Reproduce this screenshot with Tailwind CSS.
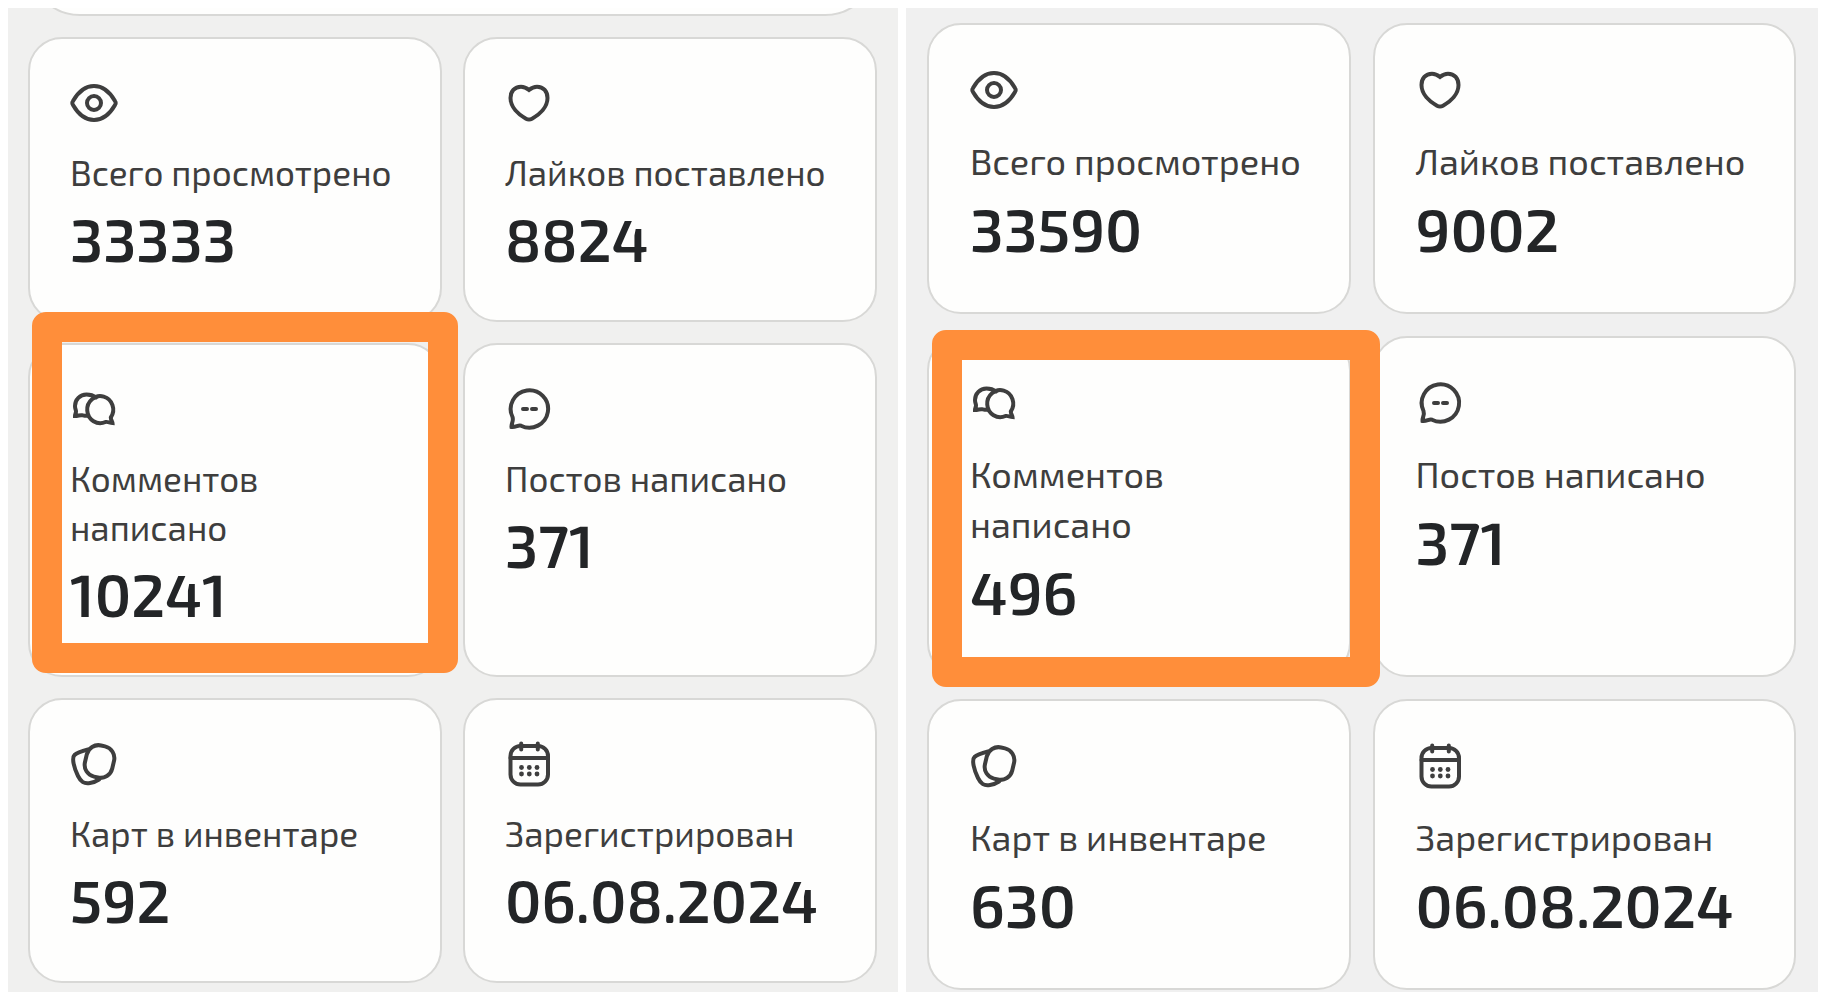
<!DOCTYPE html>
<html lang="ru">
<head>
  <meta charset="UTF-8">
  <meta name="viewport" content="width=device-width, initial-scale=1.0">
  <script src="https://cdn.jsdelivr.net/npm/@tailwindcss/browser@4"></script>
  <title>Статистика профиля</title>
</head>
<body class="bg-white p-2 font-['Exo_2','Noto_Sans',sans-serif] text-[#3e3e3e]">

  <!-- Иконки -->
  <svg class="hidden">
    <symbol id="eye" viewBox="0 0 48 48">
      <path d="M3 22C7 15 14 7 24 7s17 8 21 15c1 1.500 1 2.500 0 4-4 7-11 15-21 15S7 33 3 26c-1-1.500-1-2.500 0-4z"/>
      <circle cx="24" cy="24" r="7"/>
    </symbol>
    <symbol id="heart" viewBox="0 0 48 48">
      <path d="M24 11C21 8.500 18.500 7.700 16 7.700 9.500 7.700 5.500 12.500 5.500 19c0 9 8 16.500 15.500 20.700 2 1.100 4 1.100 6 0C34.500 35.500 42.500 28 42.500 19c0-6.500-4-11.300-10.500-11.300-2.500 0-5 .8-8 3.300z"/>
    </symbol>
    <symbol id="comments" viewBox="0 0 48 48">
      <path d="M40.800 32.500A13 13.500 0 1 0 35.500 37c2-.6 4 .8 7 1-.2-2.200-1.700-3-1.700-5.500z"/>
      <path d="M26 12.500C23.500 10.500 20 9.500 16.500 9.500 10 9.500 5 14.500 5 21c0 3 1 4 1 5.500S5 29.500 5 31c3 0 5-1.200 7-.8 1.500.3 3 .8 5.500.6"/>
    </symbol>
    <symbol id="post" viewBox="0 0 48 48">
      <path d="M7.500 32A18.700 18.700 0 1 1 16 40.700c-3-1-5 1.800-9.500 1.300C6 38.500 9 36.500 7.500 32z"/>
      <path d="M18 24h4M27 24h4"/>
    </symbol>
    <symbol id="cards" viewBox="0 0 48 48">
      <rect x="15.500" y="5.500" width="28" height="32" rx="12" transform="rotate(13 29.500 21.500)"/>
      <path d="M18 9.500C12 11 7 12.500 4.500 15 1.500 18 4 28 8 36c3 6 6 8 12 7 3-.5 6-1.500 9-3.500"/>
    </symbol>
    <symbol id="calendar" viewBox="0 0 48 48">
      <rect x="5.500" y="6" width="37.500" height="38.500" rx="10"/>
      <path d="M5.500 18H43M16.200 3.500v6M32.800 3.500v6"/>
      <g fill="currentColor" stroke="none">
        <circle cx="16.500" cy="27.500" r="2.400"/><circle cx="24.300" cy="27.500" r="2.400"/><circle cx="32" cy="27.500" r="2.400"/>
        <circle cx="16.500" cy="34" r="2.400"/><circle cx="24.300" cy="34" r="2.400"/><circle cx="32" cy="34" r="2.400"/>
      </g>
    </symbol>
  </svg>

  <main class="grid grid-cols-[890fr_912fr] gap-2">

    <!-- Первый профиль -->
    <section class="bg-[#f0f0ef] pl-5 pr-[21px] pb-[9px] overflow-hidden">
      <div class="-mt-20 mb-[21px] h-22 rounded-b-[52px] border-2 border-[#d8d8d6] bg-[#fefefd]"></div>
      <div class="grid grid-cols-2 gap-[21px]">
        <article class="rounded-[34px] border-2 border-[#d8d8d6] bg-[#fefefd] p-10">
          <svg class="mb-[21px] size-12 fill-none stroke-current stroke-4 [stroke-linecap:round]"><use href="#eye"/></svg>
          <h2 class="text-[35px] leading-[49px]">Всего просмотрено</h2>
          <p class="text-[59px] leading-[83px] font-semibold text-[#232527]">33333</p>
        </article>
        <article class="rounded-[34px] border-2 border-[#d8d8d6] bg-[#fefefd] p-10">
          <svg class="mb-[21px] size-12 fill-none stroke-current stroke-4 [stroke-linecap:round]"><use href="#heart"/></svg>
          <h2 class="text-[35px] leading-[49px]">Лайков поставлено</h2>
          <p class="text-[59px] leading-[83px] font-semibold text-[#232527]">8824</p>
        </article>
        <article class="relative rounded-[34px] border-2 border-[#d8d8d6] bg-[#fefefd] p-10">
          <svg class="mb-[21px] size-12 fill-none stroke-current stroke-4 [stroke-linecap:round]"><use href="#comments"/></svg>
          <h2 class="text-[35px] leading-[49px]">Комментов написано</h2>
          <p class="text-[59px] leading-[83px] font-semibold text-[#232527]">10241</p>
          <!-- Рамка выделения -->
          <div class="absolute -top-[33px] -right-[18px] bottom-[2px] left-[2px] z-10 rounded-[14px] border-[30px] border-[#ff8e3a]"></div>
        </article>
        <article class="rounded-[34px] border-2 border-[#d8d8d6] bg-[#fefefd] p-10">
          <svg class="mb-[21px] size-12 fill-none stroke-current stroke-4 [stroke-linecap:round]"><use href="#post"/></svg>
          <h2 class="text-[35px] leading-[49px]">Постов написано</h2>
          <p class="text-[59px] leading-[83px] font-semibold text-[#232527]">371</p>
        </article>
        <article class="rounded-[34px] border-2 border-[#d8d8d6] bg-[#fefefd] p-10">
          <svg class="mb-[21px] size-12 fill-none stroke-current stroke-4 [stroke-linecap:round]"><use href="#cards"/></svg>
          <h2 class="text-[35px] leading-[49px]">Карт в инвентаре</h2>
          <p class="text-[59px] leading-[83px] font-semibold text-[#232527]">592</p>
        </article>
        <article class="rounded-[34px] border-2 border-[#d8d8d6] bg-[#fefefd] p-10">
          <svg class="mb-[21px] size-12 fill-none stroke-current stroke-4 [stroke-linecap:round]"><use href="#calendar"/></svg>
          <h2 class="text-[35px] leading-[49px]">Зарегистрирован</h2>
          <p class="text-[59px] leading-[83px] font-semibold text-[#232527]">06.08.2024</p>
        </article>
      </div>
    </section>

    <!-- Второй профиль -->
    <section class="bg-[#f0f0f0] pl-[21px] pr-[22px] pt-[15px]">
      <div class="grid grid-cols-2 gap-[22px]">
        <article class="rounded-[34px] border-2 border-[#d8d8d6] bg-[#fefefd] p-[41px]">
          <svg class="mb-[22px] size-12 fill-none stroke-current stroke-4 [stroke-linecap:round]"><use href="#eye"/></svg>
          <h2 class="text-[36px] leading-[50px]">Всего просмотрено</h2>
          <p class="text-[60px] leading-[85px] font-semibold text-[#232527]">33590</p>
        </article>
        <article class="rounded-[34px] border-2 border-[#d8d8d6] bg-[#fefefd] p-[41px]">
          <svg class="mb-[22px] size-12 fill-none stroke-current stroke-4 [stroke-linecap:round]"><use href="#heart"/></svg>
          <h2 class="text-[36px] leading-[50px]">Лайков поставлено</h2>
          <p class="text-[60px] leading-[85px] font-semibold text-[#232527]">9002</p>
        </article>
        <article class="relative rounded-[34px] border-2 border-[#d8d8d6] bg-[#fefefd] p-[41px]">
          <svg class="mb-[22px] size-12 fill-none stroke-current stroke-4 [stroke-linecap:round]"><use href="#comments"/></svg>
          <h2 class="text-[36px] leading-[50px]">Комментов написано</h2>
          <p class="text-[60px] leading-[85px] font-semibold text-[#232527]">496</p>
          <!-- Рамка выделения -->
          <div class="absolute -top-[8px] -right-[31px] -bottom-[12px] left-[3px] z-10 rounded-[14px] border-[30px] border-[#ff8e3a]"></div>
        </article>
        <article class="rounded-[34px] border-2 border-[#d8d8d6] bg-[#fefefd] p-[41px]">
          <svg class="mb-[22px] size-12 fill-none stroke-current stroke-4 [stroke-linecap:round]"><use href="#post"/></svg>
          <h2 class="text-[36px] leading-[50px]">Постов написано</h2>
          <p class="text-[60px] leading-[85px] font-semibold text-[#232527]">371</p>
        </article>
        <article class="rounded-[34px] border-2 border-[#d8d8d6] bg-[#fefefd] p-[41px]">
          <svg class="mb-[22px] size-12 fill-none stroke-current stroke-4 [stroke-linecap:round]"><use href="#cards"/></svg>
          <h2 class="text-[36px] leading-[50px]">Карт в инвентаре</h2>
          <p class="text-[60px] leading-[85px] font-semibold text-[#232527]">630</p>
        </article>
        <article class="rounded-[34px] border-2 border-[#d8d8d6] bg-[#fefefd] p-[41px]">
          <svg class="mb-[22px] size-12 fill-none stroke-current stroke-4 [stroke-linecap:round]"><use href="#calendar"/></svg>
          <h2 class="text-[36px] leading-[50px]">Зарегистрирован</h2>
          <p class="text-[60px] leading-[85px] font-semibold text-[#232527]">06.08.2024</p>
        </article>
      </div>
    </section>

  </main>
</body>
</html>
